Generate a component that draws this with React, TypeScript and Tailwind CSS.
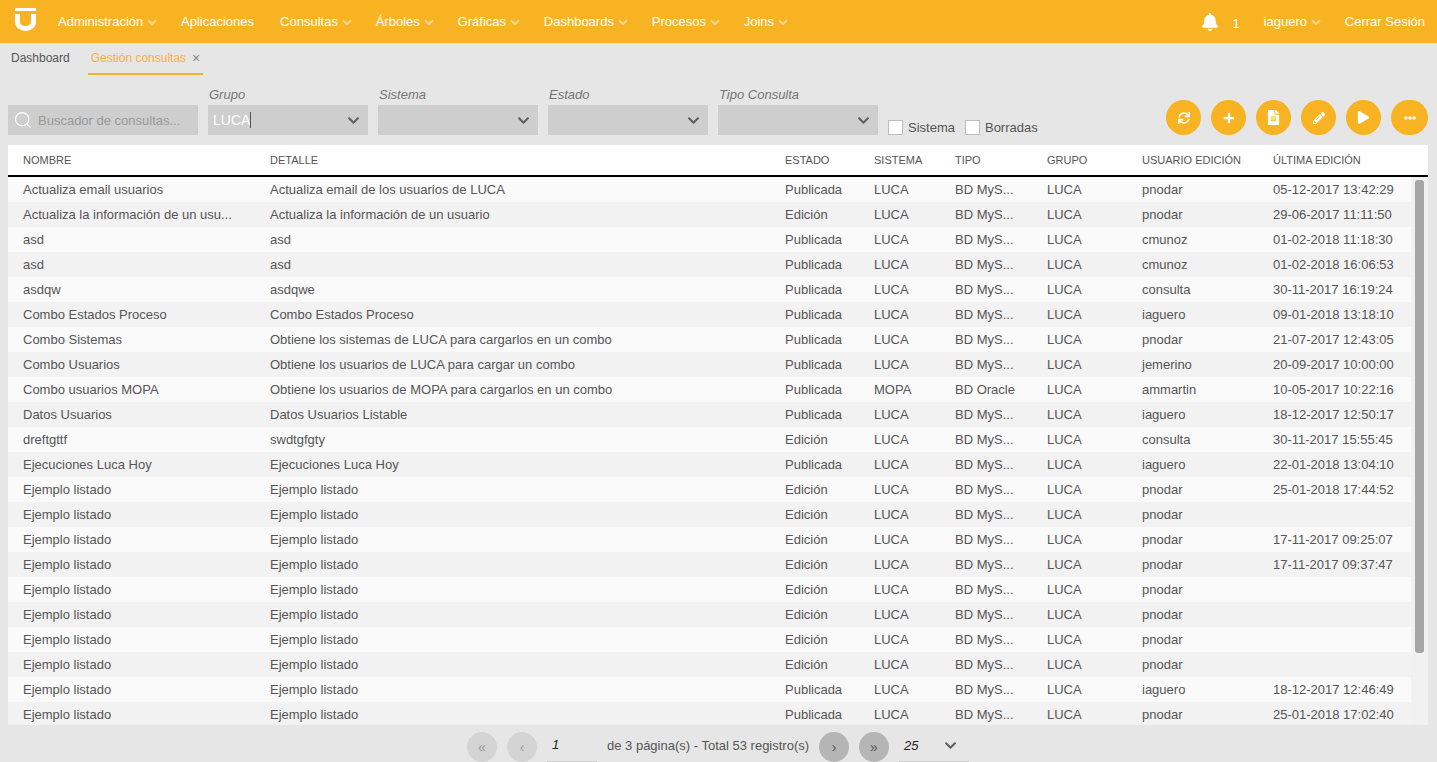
import React from 'react';
import { FaBell, FaChevronDown, FaEllipsisH, FaFileAlt, FaPencilAlt, FaPlay, FaPlus, FaSync } from 'react-icons/fa';
import { LuSearch } from 'react-icons/lu';

const navItems = [
  { label: 'Administración', arrow: true },
  { label: 'Aplicaciones', arrow: false },
  { label: 'Consultas', arrow: true },
  { label: 'Árboles', arrow: true },
  { label: 'Gráficas', arrow: true },
  { label: 'Dashboards', arrow: true },
  { label: 'Procesos', arrow: true },
  { label: 'Joins', arrow: true },
];

const rows = [
  ['Actualiza email usuarios', 'Actualiza email de los usuarios de LUCA', 'Publicada', 'LUCA', 'BD MyS...', 'pnodar', '05-12-2017 13:42:29'],
  ['Actualiza la información de un usu...', 'Actualiza la información de un usuario', 'Edición', 'LUCA', 'BD MyS...', 'pnodar', '29-06-2017 11:11:50'],
  ['asd', 'asd', 'Publicada', 'LUCA', 'BD MyS...', 'cmunoz', '01-02-2018 11:18:30'],
  ['asd', 'asd', 'Publicada', 'LUCA', 'BD MyS...', 'cmunoz', '01-02-2018 16:06:53'],
  ['asdqw', 'asdqwe', 'Publicada', 'LUCA', 'BD MyS...', 'consulta', '30-11-2017 16:19:24'],
  ['Combo Estados Proceso', 'Combo Estados Proceso', 'Publicada', 'LUCA', 'BD MyS...', 'iaguero', '09-01-2018 13:18:10'],
  ['Combo Sistemas', 'Obtiene los sistemas de LUCA para cargarlos en un combo', 'Publicada', 'LUCA', 'BD MyS...', 'pnodar', '21-07-2017 12:43:05'],
  ['Combo Usuarios', 'Obtiene los usuarios de LUCA para cargar un combo', 'Publicada', 'LUCA', 'BD MyS...', 'jemerino', '20-09-2017 10:00:00'],
  ['Combo usuarios MOPA', 'Obtiene los usuarios de MOPA para cargarlos en un combo', 'Publicada', 'MOPA', 'BD Oracle', 'ammartin', '10-05-2017 10:22:16'],
  ['Datos Usuarios', 'Datos Usuarios Listable', 'Publicada', 'LUCA', 'BD MyS...', 'iaguero', '18-12-2017 12:50:17'],
  ['dreftgttf', 'swdtgfgty', 'Edición', 'LUCA', 'BD MyS...', 'consulta', '30-11-2017 15:55:45'],
  ['Ejecuciones Luca Hoy', 'Ejecuciones Luca Hoy', 'Publicada', 'LUCA', 'BD MyS...', 'iaguero', '22-01-2018 13:04:10'],
  ['Ejemplo listado', 'Ejemplo listado', 'Edición', 'LUCA', 'BD MyS...', 'pnodar', '25-01-2018 17:44:52'],
  ['Ejemplo listado', 'Ejemplo listado', 'Edición', 'LUCA', 'BD MyS...', 'pnodar', ''],
  ['Ejemplo listado', 'Ejemplo listado', 'Edición', 'LUCA', 'BD MyS...', 'pnodar', '17-11-2017 09:25:07'],
  ['Ejemplo listado', 'Ejemplo listado', 'Edición', 'LUCA', 'BD MyS...', 'pnodar', '17-11-2017 09:37:47'],
  ['Ejemplo listado', 'Ejemplo listado', 'Edición', 'LUCA', 'BD MyS...', 'pnodar', ''],
  ['Ejemplo listado', 'Ejemplo listado', 'Edición', 'LUCA', 'BD MyS...', 'pnodar', ''],
  ['Ejemplo listado', 'Ejemplo listado', 'Edición', 'LUCA', 'BD MyS...', 'pnodar', ''],
  ['Ejemplo listado', 'Ejemplo listado', 'Edición', 'LUCA', 'BD MyS...', 'pnodar', ''],
  ['Ejemplo listado', 'Ejemplo listado', 'Publicada', 'LUCA', 'BD MyS...', 'iaguero', '18-12-2017 12:46:49'],
  ['Ejemplo listado', 'Ejemplo listado', 'Publicada', 'LUCA', 'BD MyS...', 'pnodar', '25-01-2018 17:02:40'],
];

const NavArrow = () => (
  <svg width="10" height="7" viewBox="0 0 10 7" className="ml-[4px] -mr-[2.2px] mt-[2px]">
    <path d="M1 1.2L5 5L9 1.2" fill="none" stroke="#fbd68f" strokeWidth="2" />
  </svg>
);

const Select = ({ label, value }: { label: string; value?: string }) => (
  <div className="w-40">
    <div className="h-[25px] pl-px pt-[6px] text-[13px] leading-[18px] italic text-[#757575]">{label}</div>
    <div className="flex h-[30px] items-center justify-between bg-[#cecece] pl-[5px] pr-[8px] text-[14px] text-white">
      <span className="flex items-center">
        {value}
        {value && <span className="h-4 w-px bg-[#555]" />}
      </span>
      <FaChevronDown className="text-[13px] text-[#5f5f5f]" />
    </div>
  </div>
);

const Check = ({ label }: { label: string }) => (
  <label className="flex items-center gap-[5px] text-[13px] leading-[15px] text-[#555]">
    <span className="h-[15px] w-[15px] border border-[#bdbdbd] bg-white" />
    {label}
  </label>
);

const RoundButton = ({ children, wide }: { children: React.ReactNode; wide?: boolean }) => (
  <button className={`flex h-[35px] items-center justify-center rounded-full bg-[#f7b322] text-white ${wide ? 'w-[37px]' : 'w-[35px]'}`}>
    {children}
  </button>
);

const PageButton = ({ children, dark }: { children: string; dark?: boolean }) => (
  <span className={`flex h-[30px] w-[30px] items-center justify-center rounded-full text-[14px] ${dark ? 'bg-[#b5b5b5] text-[#555]' : 'bg-[#d4d4d4] text-[#999]'}`}>
    {children}
  </span>
);

const Cell = ({ w, children }: { w: string; children: React.ReactNode }) => (
  <div className={`${w} truncate pl-[15px]`}>{children}</div>
);

export default function App() {
  return (
    <div className="flex h-[762px] w-[1437px] flex-col overflow-hidden bg-[#e6e6e6] font-['Liberation_Sans',sans-serif] text-[13px] text-[#555]">
      <header className="flex h-[43px] shrink-0 items-center bg-[#f7b322] pr-[12px] text-white">
        <svg width="21" height="23" viewBox="0 0 21 23" className="ml-[15px] mb-[4px]">
          <rect x="0" y="0" width="21" height="3" fill="#fff" />
          <path d="M2.5 6V14a8 6.5 0 0 0 16 0V6" fill="none" stroke="#fff" strokeWidth="5" />
        </svg>
        <nav className="ml-[22px] flex items-center gap-[26px]">
          {navItems.map(item => (
            <span key={item.label} className="flex items-center">
              {item.label}
              {item.arrow && <NavArrow />}
            </span>
          ))}
        </nav>
        <div className="ml-auto flex items-center">
          <FaBell className="text-[18px]" />
          <span className="ml-[13px] mt-[4px]">1</span>
          <span className="ml-[24px] flex items-center">
            iaguero <NavArrow />
          </span>
          <span className="ml-[26px]">Cerrar Sesión</span>
        </div>
      </header>

      <div className="flex h-[32px] shrink-0 items-center px-[11px] text-[12px]">
        <span className="mb-[2px] text-[#555]">Dashboard</span>
        <span className="ml-[18px] flex h-full w-[115px] items-center gap-[6px] whitespace-nowrap border-b-2 border-[#f7b322] px-[3px] text-[#f7b040]">
          Gestión consultas <span className="text-[14px] text-[#888]">×</span>
        </span>
      </div>

      <div className="flex h-[70px] shrink-0 items-end pl-[8px] pr-[9px] pb-[10px]">
        <div className="mr-[10px] flex h-[30px] w-[190px] items-center bg-[#cecece] pl-[5px] text-[13px] text-[#999]">
          <LuSearch className="mr-[5px] text-[20px] text-white" strokeWidth={1.5} />
          <span className="mt-[2px]">Buscador de consultas...</span>
        </div>
        <div className="flex gap-[10px]">
          <Select label="Grupo" value="LUCA" />
          <Select label="Sistema" />
          <Select label="Estado" />
          <Select label="Tipo Consulta" />
        </div>
        <div className="ml-[10px] flex gap-[10px]">
          <Check label="Sistema" />
          <Check label="Borradas" />
        </div>
        <div className="ml-auto flex gap-[10px]">
          <RoundButton><FaSync className="text-[12px]" /></RoundButton>
          <RoundButton><FaPlus className="text-[12px]" /></RoundButton>
          <RoundButton><FaFileAlt className="text-[15px]" /></RoundButton>
          <RoundButton><FaPencilAlt className="text-[12px]" /></RoundButton>
          <RoundButton><FaPlay className="text-[13px]" /></RoundButton>
          <RoundButton wide><FaEllipsisH className="text-[12px]" /></RoundButton>
        </div>
      </div>

      <div className="mx-[8px] w-[1420px] shrink-0 bg-white">
        <div className="flex h-[32px] items-center border-b-2 border-black text-[11px] text-[#555]">
          <Cell w="w-[247px]">NOMBRE</Cell>
          <Cell w="w-[515px]">DETALLE</Cell>
          <Cell w="w-[89px]">ESTADO</Cell>
          <Cell w="w-[81px]">SISTEMA</Cell>
          <Cell w="w-[92px]">TIPO</Cell>
          <Cell w="w-[95px]">GRUPO</Cell>
          <Cell w="w-[131px]">USUARIO EDICIÓN</Cell>
          <Cell w="w-[155px]">ÚLTIMA EDICIÓN</Cell>
        </div>
      </div>

      <div className="relative mx-[8px] h-[548px] w-[1420px] shrink-0 overflow-hidden bg-[#f2f2f2]">
        {rows.map((r, i) => (
          <div key={i} className={`flex h-[25px] items-center ${i % 2 === 0 ? 'bg-[#fafafa]' : 'bg-[#f2f2f2]'}`}>
            <Cell w="w-[247px]">{r[0]}</Cell>
            <Cell w="w-[515px]">{r[1]}</Cell>
            <Cell w="w-[89px]">{r[2]}</Cell>
            <Cell w="w-[81px]">{r[3]}</Cell>
            <Cell w="w-[92px]">{r[4]}</Cell>
            <Cell w="w-[95px]">LUCA</Cell>
            <Cell w="w-[131px]">{r[5]}</Cell>
            <Cell w="w-[148px]">{r[6]}</Cell>
          </div>
        ))}
        <div className="absolute right-0 top-0 h-full w-[17px] bg-[#f1f1f1]">
          <div className="mx-auto mt-[3px] h-[473px] w-[9px] rounded-[3px] bg-[#a6a6a6]" />
        </div>
      </div>

      <div className="flex flex-1 items-start pl-[467px] pt-[7px]">
        <div className="flex items-center">
          <PageButton>«</PageButton>
          <span className="ml-[10px]"><PageButton>‹</PageButton></span>
          <span className="ml-[10px] h-[30px] w-[50px] border-b border-[#cecece] pl-[5px] pt-[3px] italic text-[#222]">1</span>
          <span className="ml-[10px] mb-[2px] w-[202px] whitespace-nowrap text-[#555]">de 3 página(s) - Total 53 registro(s)</span>
          <span className="ml-[10px]"><PageButton dark>›</PageButton></span>
          <span className="ml-[10px]"><PageButton dark>»</PageButton></span>
          <span className="ml-[10px] flex h-[30px] w-[70px] items-center justify-between border-b border-[#cecece] pb-[2px] pl-[5px] pr-[12px] italic text-[#222]">
            25 <FaChevronDown className="text-[13px] text-[#5f5f5f]" />
          </span>
        </div>
      </div>
    </div>
  );
}
